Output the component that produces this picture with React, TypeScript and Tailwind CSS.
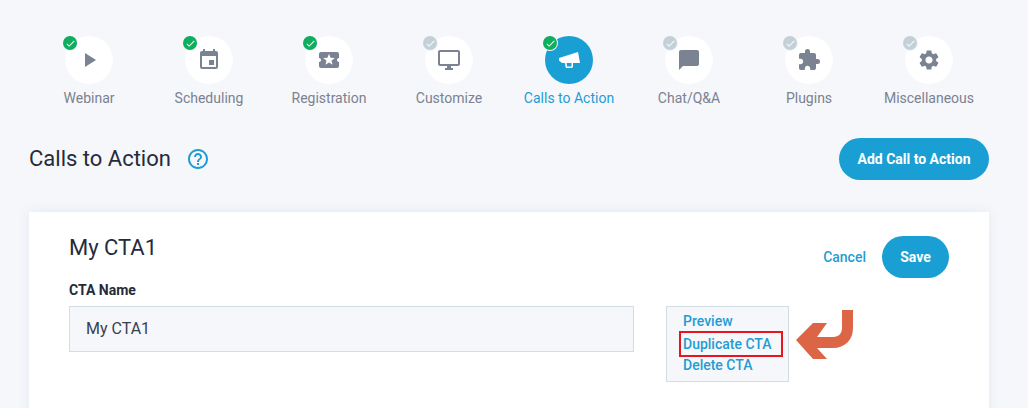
import { MdPlayArrow, MdEvent, MdLocalActivity, MdOutlineDesktopWindows, MdChatBubble, MdExtension, MdSettings, MdCheck, MdHelpOutline } from "react-icons/md"
import type { ReactNode } from "react"

const font = { fontFamily: "Roboto, sans-serif" }

function Megaphone() {
  return (
    <svg width="26" height="26" viewBox="0 0 26 26" fill="#fff">
      <path d="M22 5 L24 16 L6 16 L3 13.5 L3 11 Z" />
      <path d="M9 16 L9.6 20 C9.7 20.6 10.1 21 10.8 21 L15.6 21 C16.4 21 17 20.5 17 19.6 L17 16 L15.5 16 L15.5 19.5 L11 19.5 L10.6 16 Z" />
    </svg>
  )
}

const steps: { label: string; icon: ReactNode; done: boolean; active?: boolean }[] = [
  { label: "Webinar", icon: <MdPlayArrow size={24} />, done: true },
  { label: "Scheduling", icon: <MdEvent size={24} />, done: true },
  { label: "Registration", icon: <MdLocalActivity size={24} />, done: true },
  { label: "Customize", icon: <MdOutlineDesktopWindows size={24} />, done: false },
  { label: "Calls to Action", icon: <Megaphone />, done: true, active: true },
  { label: "Chat/Q&A", icon: <MdChatBubble size={24} />, done: false },
  { label: "Plugins", icon: <MdExtension size={24} />, done: false },
  { label: "Miscellaneous", icon: <MdSettings size={24} />, done: false },
]

function Step({ label, icon, done, active }: { label: string; icon: ReactNode; done: boolean; active?: boolean }) {
  return (
    <div className="flex w-[120px] flex-col items-center">
      <div
        className={
          active
            ? "relative flex h-12 w-12 items-center justify-center rounded-full bg-[#1a9fd4] text-white"
            : "relative flex h-12 w-12 items-center justify-center rounded-full bg-white text-[#7b8291]"
        }
      >
        {icon}
        <span
          className={
            done
              ? "absolute left-[-2px] top-0 flex h-[14px] w-[14px] items-center justify-center rounded-full bg-[#0fae5f] text-white ring-1 ring-[#f5f7fb]"
              : "absolute left-[-2px] top-0 flex h-[14px] w-[14px] items-center justify-center rounded-full bg-[#c3d0d8] text-white ring-1 ring-[#f5f7fb]"
          }
        >
          <MdCheck size={11} />
        </span>
      </div>
      <div className={active ? "mt-[6px] text-sm leading-4 text-[#1f9dd3]" : "mt-[6px] text-sm leading-4 text-[#7b8291]"}>{label}</div>
    </div>
  )
}

export default function App() {
  return (
    <div className="h-[408px] w-[1028px] overflow-hidden bg-[#f5f7fb] px-[29px] pt-9" style={font}>
      <div className="flex">
        {steps.map((s) => (
          <Step key={s.label} {...s} />
        ))}
      </div>

      <div className="mt-[32px] flex h-[42px] items-center justify-between pr-[10px]">
        <div className="flex items-center">
          <h1 className="pb-[2px] text-[22px] font-normal text-[#252b3a]">Calls to Action</h1>
          <span className="ml-[15px] text-[#1f9dd3]">
            <MdHelpOutline size={24} />
          </span>
        </div>
        <button className="h-[42px] w-[150px] rounded-full bg-[#1a9fd4] text-sm font-bold text-white">Add Call to Action</button>
      </div>

      <div className="relative mt-8 mr-[10px] h-[300px] bg-white px-10 pt-6 shadow-[0_0_12px_rgba(40,60,90,0.08)]">
        <div className="flex items-start justify-between">
          <h2 className="text-[22px] leading-6 font-normal text-[#252b3a]">My CTA1</h2>
          <div className="flex items-center">
            <a className="text-sm font-medium text-[#1f9dd3]">Cancel</a>
            <button className="ml-4 h-[42px] w-[67px] rounded-full bg-[#1a9fd4] text-sm font-bold text-white">Save</button>
          </div>
        </div>

        <label className="mt-1 block text-sm leading-4 font-bold text-[#252b3a]">CTA Name</label>

        <div className="mt-2 flex items-start">
          <div className="flex h-[46px] w-[565px] items-center border border-[#d3dde4] bg-[#f5f7fb] px-4 text-base text-[#3a4050]">My CTA1</div>
          <div className="ml-8 h-[76px] w-[123px] border border-[#d3dde4] bg-[#f5f7fb] pl-3 pt-[6px] text-sm font-medium text-[#1f9dd3]">
            <div className="pl-1 leading-[16px]">Preview</div>
            <div className="mt-[2px] w-[104px] border-2 border-[#e8151f] py-[2px] pl-[2px] leading-[18px]">Duplicate CTA</div>
            <div className="pl-1 leading-[16px]">Delete CTA</div>
          </div>
        </div>

        <svg className="absolute left-[766px] top-[97px]" width="60" height="54" viewBox="0 0 60 54" fill="#dc6545">
          <path d="M1 31 L18 14 L32 14 L22 28 L38 28 C44 28 47 24 47 19 L47 1 L58 1 L58 19 C58 31 50 39 38 39 L22 39 L32 50 L18 50 Z" />
        </svg>
      </div>
    </div>
  )
}
